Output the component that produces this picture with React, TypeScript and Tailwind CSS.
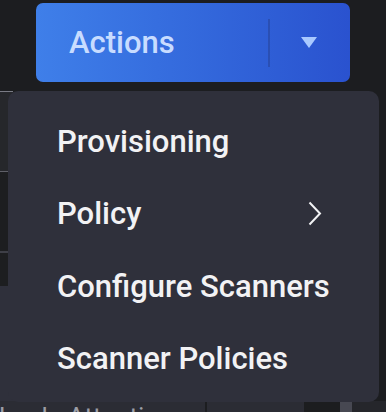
const menuItems = [
  { label: "Provisioning", submenu: false },
  { label: "Policy", submenu: true },
  { label: "Configure Scanners", submenu: false },
  { label: "Scanner Policies", submenu: false },
];

export default function App() {
  return (
    <div className="relative w-[386px] h-[412px] overflow-hidden bg-[#1c1d20] font-['Roboto',sans-serif]">
      {/* Split button */}
      <div className="pt-[3px] pl-[36px]">
        <ActionsButton />
      </div>

      {/* Page content behind the dropdown */}
      <div className="mt-[9px] flex flex-col">
        <div className="h-px w-[13px] bg-[#7a7b85]" />
        <div className="h-[80px] w-[300px] bg-[#26272b] border-b border-[#5f6068]" />
        <div className="h-[81px] w-[300px] bg-[#1d1e20] border-b-2 border-[#3e3f47]" />
        <div className="h-[33px] w-[300px] bg-[#1d1e20]" />
        <div className="h-[115px] w-[300px] bg-[#2f303b]" />
        <div className="h-[20px] flex bg-[#2b2c34]">
          <div className="w-[207px] border-r-2 border-[#1c1d20] overflow-hidden">
            <p className="-ml-[13px] text-[26px] leading-none pt-[3px] text-[#9c9ea6] whitespace-nowrap">Needs Attention</p>
          </div>
          <div className="w-[97px]" />
          <div className="w-[36px] bg-[#1c1d1f]" />
          <div className="w-[12px] bg-[#474852]" />
          <div className="flex-1 bg-[#25262b]" />
        </div>
      </div>

      <ActionsMenu />
    </div>
  );
}

function ActionsButton() {
  return (
    <button className="flex items-center w-[314px] h-[79px] rounded-[7px] bg-linear-to-r from-[#3f7fe9] to-[#2a52cf] text-left">
      <span className="pl-[33px] w-[232px] text-[31px] font-medium text-[#c8dcff] leading-none">Actions</span>
      <span className="w-[2px] h-[48px] bg-[#2a4fb4]" />
      <span className="flex-1 flex items-center justify-center pr-[2px]">
        <svg width="16" height="11" viewBox="0 0 16 11">
          <polygon points="0,0 16,0 8,11" fill="#a9c9ff" />
        </svg>
      </span>
    </button>
  );
}

function ActionsMenu() {
  return (
    <div className="absolute top-[91px] left-[8px] w-[371px] h-[311px] rounded-[10px] bg-[#2f303b] pt-[14px]">
      {menuItems.map((item) => (
        <div
          key={item.label}
          className="h-[72.5px] flex items-center pl-[49px] pr-[57px] text-[31px] font-medium text-[#f2f2f4]"
        >
          <span className="flex-1 leading-none whitespace-nowrap">{item.label}</span>
          {item.submenu && (
            <svg width="14" height="25" viewBox="0 0 14 25" fill="none">
              <polyline points="1.5,1.5 12,12.5 1.5,23.5" stroke="#f2f2f4" strokeWidth="2" />
            </svg>
          )}
        </div>
      ))}
    </div>
  );
}
